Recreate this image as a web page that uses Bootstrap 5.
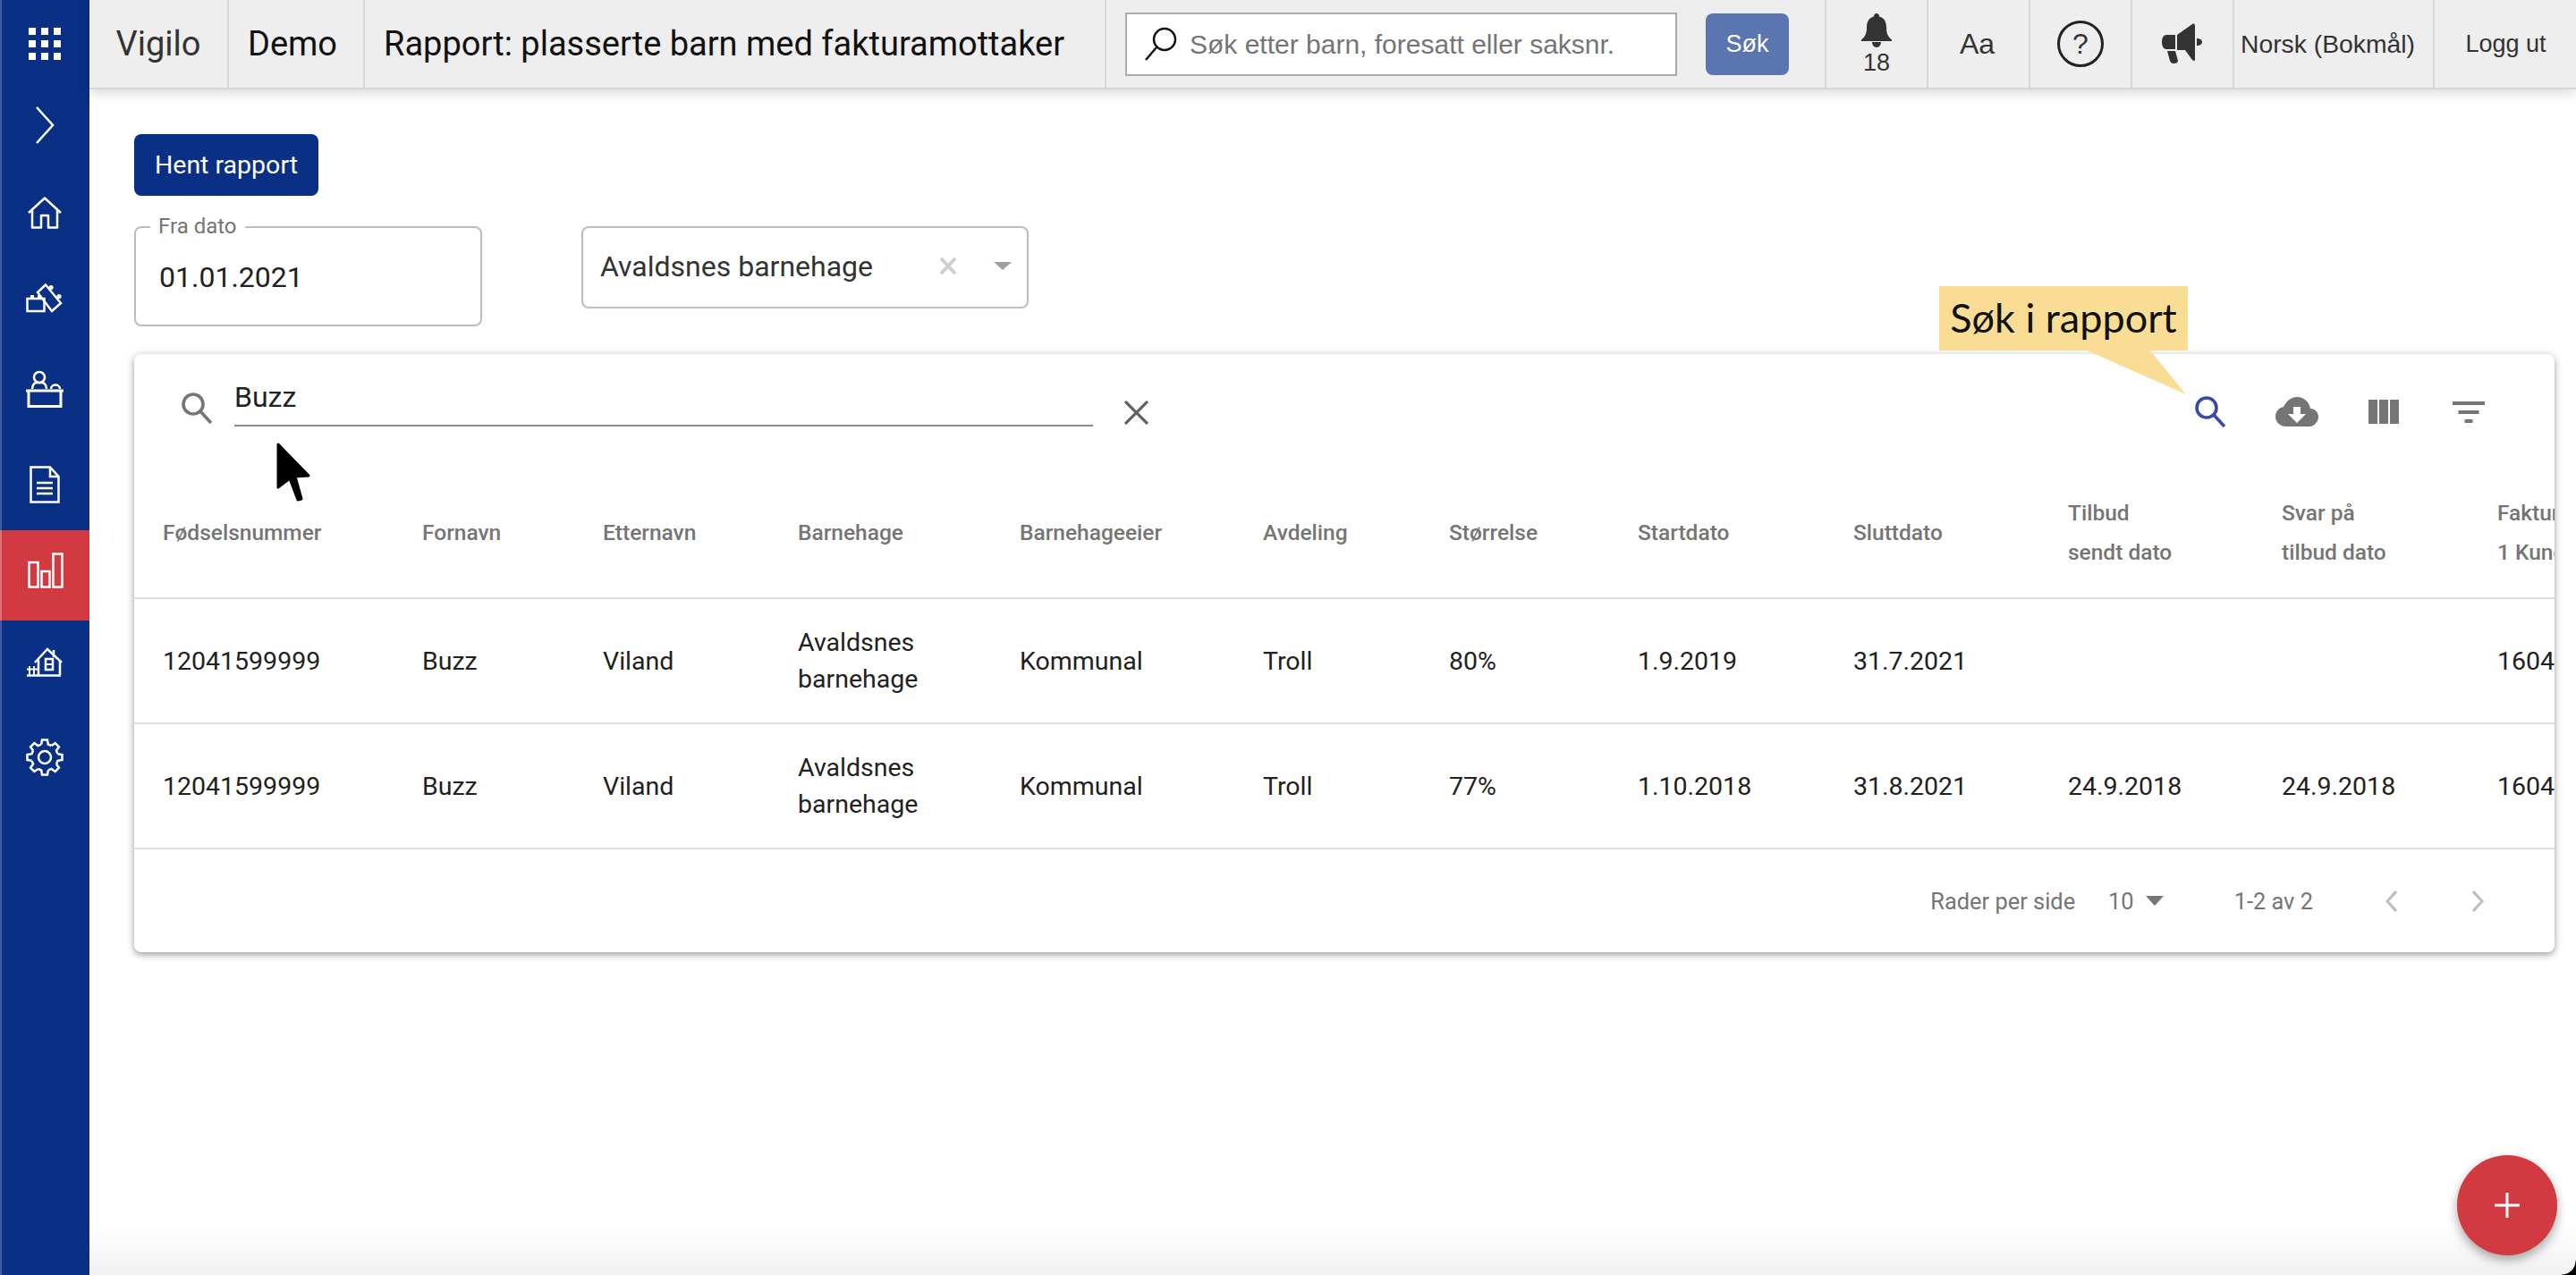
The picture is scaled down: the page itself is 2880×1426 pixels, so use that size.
<!doctype html>
<html lang="nb">
<head>
<meta charset="utf-8">
<title>Vigilo</title>
<link href="https://cdn.jsdelivr.net/npm/bootstrap@5.3.0/dist/css/bootstrap.min.css" rel="stylesheet">
<style>
html,body{height:100%;overflow:hidden;background:#fff}
body{font-family:Roboto,"Liberation Sans",sans-serif;color:#212121}
.vg-shell{height:1426px;width:2880px;position:relative}
.vg-side{width:100px;flex:none;background:#0a3085;border-left:2px solid #3f5d9f;margin:0}
.vg-side a{display:flex;align-items:center;justify-content:center;margin-left:-2px;width:100px;color:#fff}
.vg-side svg{fill:none;stroke:#fff;stroke-width:2.5}
.vg-side svg.vg-solid{fill:#fff;stroke:none}
.s0{height:98px}.s1{height:84px}.s2{height:112px}.s3{height:78px}.s4{height:126px}.s5{height:88px;margin-bottom:7px}
.s6{height:101px;padding-bottom:11px;background:#d13a40;border-left:2px solid #dd7175}
.s7{height:92px}.s8{height:122px}
.vg-main{flex:1;min-width:0;position:relative;background:linear-gradient(#fff calc(100% - 60px),#f1f1f1)}
.vg-top{height:100px;background:#eee;border-bottom:2px solid #d6d6d6;box-shadow:0 4px 14px rgba(0,0,0,.16);position:relative}
.vg-cell{height:98px;display:flex;align-items:center;justify-content:center;border-right:2px solid #d8d8d8;flex:none}
.t1{width:156px;font-size:38px;color:#333}
.t2{width:152px;font-size:38px;color:#111;padding-right:8px}
.t3{width:829px;font-size:38px;color:#111;justify-content:flex-start;padding-left:21px;white-space:nowrap}
.t4{width:805px;justify-content:flex-start;padding-left:21px;gap:32px}
.t5{width:114px}
.t6{width:224px;padding-right:13px}
.t7{width:159px;border-right:0}
.vg-sans{font-family:"Liberation Sans",Arial,sans-serif;color:#333}
.vg-search{width:617px;height:71px;background:#fff;border:2px solid #aaa;display:flex;align-items:center;padding-left:20px;gap:14px;font-size:30px;color:#757575;font-family:"Liberation Sans",sans-serif;white-space:nowrap}
.vg-sok{width:93px;height:69px;background:#5a75b0;color:#fff;border:0;border-radius:8px;font-size:27px;padding:0;font-family:"Liberation Sans",sans-serif}
.vg-bell{flex-direction:column;font-size:27px;line-height:1;gap:4px}
.vg-aa{font-size:32px;padding-right:3px}
.vg-help{width:52px;height:52px;border:3px solid #222;border-radius:50%;font-size:32px;display:flex;align-items:center;justify-content:center;color:#333}
.t6.vg-small{font-size:28.3px}
.t7.vg-small{font-size:27px}
.vg-body{padding:50px 25px 0 50px}
.vg-fetch{width:206px;height:69px;background:#0a3085;color:#fff;border:0;border-radius:8px;font-size:28.5px;font-weight:400;padding:2px 0 0;display:block}
.vg-filters{margin-top:34px;gap:111px;align-items:flex-start}
.vg-date{width:389px;height:112px;border:2px solid #bdbdbd;border-radius:8px;position:relative;padding:27px 26px 0;font-size:32px;line-height:56px}
.vg-date span{position:absolute;left:16px;top:-16px;background:#fff;padding:0 9px;font-size:24px;line-height:28px;color:#757575}
.vg-select{width:500px;height:92px;border:2px solid #bdbdbd;border-radius:8px;padding:0 0 3px 19px;font-size:32px}
.vg-select .vg-name{flex:1;color:#333}
.vg-caret{width:0;height:0;border-left:10px solid transparent;border-right:10px solid transparent;border-top:9px solid #a0a0a0;margin:0 17px 0 41px}
.vg-card{margin-top:31px;width:2706px;height:669px;background:#fff;border-radius:8px;box-shadow:0 3px 7px rgba(0,0,0,.32),0 0 14px rgba(0,0,0,.1);overflow:hidden;position:relative}
.vg-bar{height:127px;position:relative;padding-left:53px}
.vg-find{margin-top:43px}
.vg-q{width:960px;height:81px;border-bottom:2px solid #8c8c8c;margin-left:25px;font-size:32px;line-height:50px;color:#212121;padding-top:23px}
.vg-clear{margin:52px 0 0 35px}
.vg-tools{gap:56px;margin:47px 78px 0 auto}
.vg-tools svg,.vg-ic{display:block;flex:none}
.vg-tools .vg-last{margin-left:4px}
.vg-wrap{overflow:hidden;width:100%}
.vg-table{table-layout:fixed;width:2870px;margin:0;border-collapse:collapse;--bs-table-bg:transparent}
.vg-table th,.vg-table td{padding:0 0 0 32px;border-bottom:2px solid #e0e0e0;vertical-align:middle;white-space:nowrap;overflow:hidden}
.vg-table th{height:146px;font-size:24.5px;font-weight:500;color:#757575;line-height:44px}
.vg-table td{height:140px;font-size:28.5px;font-weight:400;color:#212121;line-height:41px}
.c1{width:290px}.c2{width:202px}.c3{width:218px}.c4{width:248px}.c5{width:272px}.c6{width:208px}.c7{width:211px}.c8{width:241px}.c9{width:240px}.c10{width:239px}.c11{width:241px}.c12{width:260px}
.vg-foot{height:116px;padding-right:78px;font-size:25.4px;color:#757575}
.vg-rows{margin-left:37px}
.vg-caret2{width:0;height:0;border-left:10px solid transparent;border-right:10px solid transparent;border-top:11px solid #757575;margin-left:13px}
.vg-count{margin:0 80px 0 79px}
.vg-pager{gap:82px}
.vg-tip{position:absolute;left:2068px;top:320px;height:72px;width:278px;background:#fadd94;color:#111;font-family:Lato,sans-serif;font-size:45px;display:flex;align-items:center;justify-content:center;white-space:nowrap}
.vg-tail{position:absolute;left:2228px;top:391px}
.vg-fab{position:absolute;left:2647px;top:1292px;width:112px;height:112px;border-radius:50%;background:#d13a40;border:0;padding:0;box-shadow:0 5px 12px rgba(0,0,0,.35);display:flex;align-items:center;justify-content:center}
.vg-mouse{position:absolute;left:208px;top:495px}
.vg-corner{position:absolute;right:0;bottom:0;width:16px;height:16px;background:radial-gradient(circle at 0 0,transparent 15px,#000 16px)}
</style>
</head>
<body>
<div class="vg-shell d-flex">
  <nav class="vg-side d-flex flex-column">
    <a class="s0" href="#"><svg class="vg-solid" width="36" height="36" viewBox="0 0 36 36"><rect x="0" y="0" width="8" height="8"/><rect x="14" y="0" width="8" height="8"/><rect x="28" y="0" width="8" height="8"/><rect x="0" y="14" width="8" height="8"/><rect x="14" y="14" width="8" height="8"/><rect x="28" y="14" width="8" height="8"/><rect x="0" y="28" width="8" height="8"/><rect x="14" y="28" width="8" height="8"/><rect x="28" y="28" width="8" height="8"/></svg></a>
    <a class="s1" href="#"><svg width="24" height="42" viewBox="0 0 24 42"><path d="M3 1l18 20L3 41"/></svg></a>
    <a class="s2" href="#"><svg width="38" height="36" viewBox="0 0 38 36"><path d="M1 18L19 1.500 37 18M5 15v19.500h10V21h8v13.500h10V15" stroke-linejoin="round"/></svg></a>
    <a class="s3" href="#"><svg width="42" height="34" viewBox="0 0 42 34"><rect x="1.500" y="18" width="19" height="14"/><path d="M22 2.500L13 11 29 32 39 23z"/><g><rect x="5" y="14" width="4" height="4" fill="#fff" stroke="none"/><rect x="13" y="14" width="4" height="4" fill="#fff" stroke="none"/><circle cx="28" cy="5.500" r="2.600" fill="#fff" stroke="none"/><circle cx="37" cy="15.500" r="2.600" fill="#fff" stroke="none"/></g></svg></a>
    <a class="s4" href="#"><svg width="42" height="42" viewBox="0 0 42 42"><circle cx="15" cy="8" r="6"/><path d="M7 21c0-5 3-7 5-7h6c2 0 5 2 5 7M28 21c0-6 10-6 10 0"/><path d="M0 23h42M3 23V40.500h36V23" stroke-width="3"/></svg></a>
    <a class="s5" href="#"><svg width="34" height="42" viewBox="0 0 34 42"><path d="M1.500 1.500H23L32.500 12v28.500h-31zM23 1.500V12h9.500"/><path d="M8 19h18M8 25h18M8 31h18"/></svg></a>
    <a class="s6" href="#"><svg width="40" height="40" viewBox="0 0 40 40"><rect x="1.500" y="11" width="10" height="27.500"/><rect x="15.500" y="21" width="9" height="17.500"/><rect x="28.500" y="1.500" width="10" height="37"/></svg></a>
    <a class="s7" href="#"><svg width="40" height="33" viewBox="0 0 40 33"><path d="M9 17L23 2l16 15M30 3v8M13 14v17M37 15v16M0 31.500h38"/><rect x="21" y="13" width="8" height="12"/><path d="M21 19h8M3 21v10M8 21v10M0 24.500h12" stroke-width="2"/></svg></a>
    <a class="s8" href="#"><svg width="42" height="42" viewBox="-21 -21 42 42"><defs><path id="vg-tooth" d="M-3.800-14.500L-3-19.500H3L3.800-14.500 7.400-13"/></defs><use href="#vg-tooth"/><use href="#vg-tooth" transform="rotate(45)"/><use href="#vg-tooth" transform="rotate(90)"/><use href="#vg-tooth" transform="rotate(135)"/><use href="#vg-tooth" transform="rotate(180)"/><use href="#vg-tooth" transform="rotate(225)"/><use href="#vg-tooth" transform="rotate(270)"/><use href="#vg-tooth" transform="rotate(315)"/><circle r="7"/></svg></a>
  </nav>
  <div class="vg-main">
    <header class="vg-top d-flex">
      <div class="vg-cell t1">Vigilo</div>
      <div class="vg-cell t2">Demo</div>
      <div class="vg-cell t3">Rapport: plasserte barn med fakturamottaker</div>
      <div class="vg-cell t4">
        <div class="vg-search"><svg width="36" height="38" viewBox="0 0 36 38" fill="none" stroke="#111" stroke-width="2.500"><circle cx="22" cy="14" r="12"/><path d="M13 23L1 37"/></svg><span>Søk etter barn, foresatt eller saksnr.</span></div>
        <button class="vg-sok" type="button">Søk</button>
      </div>
      <div class="vg-cell t5 vg-sans vg-bell"><svg width="34" height="38" viewBox="0 0 34 38" fill="#333"><path d="M17 0c2 0 3 1.500 3 3.500C26 5 28 10 28 16c0 7 2 10 6 13.500V31H0v-1.500C4 26 6 23 6 16 6 10 8 5 14 3.500 14 1.500 15 0 17 0z"/><path d="M12 32h10c0 3-2 6-5 6s-5-3-5-6z"/></svg><span>18</span></div>
      <div class="vg-cell t5 vg-sans vg-aa">Aa</div>
      <div class="vg-cell t5"><div class="vg-help vg-sans">?</div></div>
      <div class="vg-cell t5"><svg width="46" height="46" viewBox="0 0 46 46" fill="#333"><path d="M5 13h10v16H5C2 29 0 26 0 21s2-8 5-8z"/><path d="M17 13L34 1c2-1 3 0 3 2v37c0 2-1 3-3 1L26 30H17z"/><path d="M39 17c4 0 6 2 6 4s-2 4-6 4z"/><path d="M6 31h9l3 11c0 2-2 3-5 3-2 0-3-1-4-3z"/></svg></div>
      <div class="vg-cell t6 vg-sans vg-small">Norsk (Bokmål)</div>
      <div class="vg-cell t7 vg-sans vg-small">Logg ut</div>
    </header>
    <div class="vg-body">
      <button class="vg-fetch" type="button">Hent rapport</button>
      <div class="vg-filters d-flex">
        <div class="vg-date"><span>Fra dato</span>01.01.2021</div>
        <div class="vg-select d-flex align-items-center"><span class="vg-name">Avaldsnes barnehage</span><svg width="20" height="21" viewBox="0 0 20 21" fill="none" stroke="#cfcfcf" stroke-width="4"><path d="M2 2l16 17M18 2L2 19"/></svg><i class="vg-caret"></i></div>
      </div>
      <section class="vg-card">
        <div class="vg-bar d-flex align-items-start">
          <svg class="vg-ic vg-find" width="34" height="35" viewBox="0 0 34 35" fill="none" stroke="#757575" stroke-width="3.600"><circle cx="13" cy="13" r="11"/><path d="M21 21l12 13"/></svg>
          <div class="vg-q">Buzz</div>
          <svg class="vg-ic vg-clear" width="27" height="27" viewBox="0 0 27 27" fill="none" stroke="#616161" stroke-width="3.200"><path d="M1 1l25 25M26 1L1 26"/></svg>
          <div class="vg-tools d-flex align-items-center">
            <svg width="34" height="35" viewBox="0 0 34 35" fill="none" stroke="#3949ab" stroke-width="3.600"><circle cx="13" cy="13" r="11"/><path d="M21 21l12 13"/></svg>
            <svg width="48" height="33" viewBox="0 0 48 33" fill="#757575"><path d="M12 33C5 33 0 28 0 22c0-6 4-10 9-11C12 5 17 0 24 0c8 0 14 6 15 13 5 0 9 4 9 9 0 6-5 11-10 11z"/><path d="M20 11h8v8h6L24 29 14 19h6z" fill="#fff"/></svg>
            <svg width="34" height="27" viewBox="0 0 34 27" fill="#757575"><rect width="10" height="27"/><rect x="12" width="10" height="27"/><rect x="24" width="10" height="27"/></svg>
            <svg class="vg-last" width="36" height="24" viewBox="0 0 36 24" fill="#757575"><rect y="0" width="36" height="4"/><rect x="6.500" y="10" width="23" height="4"/><rect x="13.500" y="20" width="9" height="4"/></svg>
          </div>
        </div>
        <div class="vg-wrap">
          <table class="table vg-table">
            <thead><tr>
              <th class="c1">Fødselsnummer</th><th class="c2">Fornavn</th><th class="c3">Etternavn</th><th class="c4">Barnehage</th><th class="c5">Barnehageeier</th><th class="c6">Avdeling</th><th class="c7">Størrelse</th><th class="c8">Startdato</th><th class="c9">Sluttdato</th><th class="c10">Tilbud<br>sendt dato</th><th class="c11">Svar på<br>tilbud dato</th><th class="c12">Faktura-<br>1 Kunde</th>
            </tr></thead>
            <tbody>
              <tr><td>12041599999</td><td>Buzz</td><td>Viland</td><td>Avaldsnes<br>barnehage</td><td>Kommunal</td><td>Troll</td><td>80%</td><td>1.9.2019</td><td>31.7.2021</td><td></td><td></td><td>160400</td></tr>
              <tr><td>12041599999</td><td>Buzz</td><td>Viland</td><td>Avaldsnes<br>barnehage</td><td>Kommunal</td><td>Troll</td><td>77%</td><td>1.10.2018</td><td>31.8.2021</td><td>24.9.2018</td><td>24.9.2018</td><td>160400</td></tr>
            </tbody>
          </table>
        </div>
        <div class="vg-foot d-flex align-items-center justify-content-end">
          <span>Rader per side</span>
          <span class="vg-rows d-flex align-items-center"><span>10</span><i class="vg-caret2"></i></span>
          <span class="vg-count">1-2 av 2</span>
          <span class="vg-pager d-flex">
            <svg width="15" height="24" viewBox="0 0 15 24" fill="none" stroke="#bdbdbd" stroke-width="3"><path d="M13 1L3 12l10 11"/></svg>
            <svg width="15" height="24" viewBox="0 0 15 24" fill="none" stroke="#bdbdbd" stroke-width="3"><path d="M2 1l10 11L2 23"/></svg>
          </span>
        </div>
      </section>
    </div>
    <div class="vg-tip">Søk i rapport</div>
    <svg class="vg-tail" width="120" height="54" viewBox="0 0 120 54" fill="#fadd94"><path d="M3 0h72l41 50z"/></svg>
    <svg class="vg-mouse" width="42" height="68" viewBox="0 0 42 68" fill="#000" stroke="#000" stroke-width="3" stroke-linejoin="round"><path d="M3 2v48l13-10 9 24 4-1-7-25 15-1z"/></svg>
    <button class="vg-fab" type="button" aria-label="Legg til"><svg width="28" height="28" viewBox="0 0 28 28" stroke="#fff" stroke-width="3"><path d="M14 0v28M0 14h28"/></svg></button>
  </div>
  <div class="vg-corner"></div>
</div>
<script src="https://cdn.jsdelivr.net/npm/bootstrap@5.3.0/dist/js/bootstrap.bundle.min.js"></script>
</body>
</html>
